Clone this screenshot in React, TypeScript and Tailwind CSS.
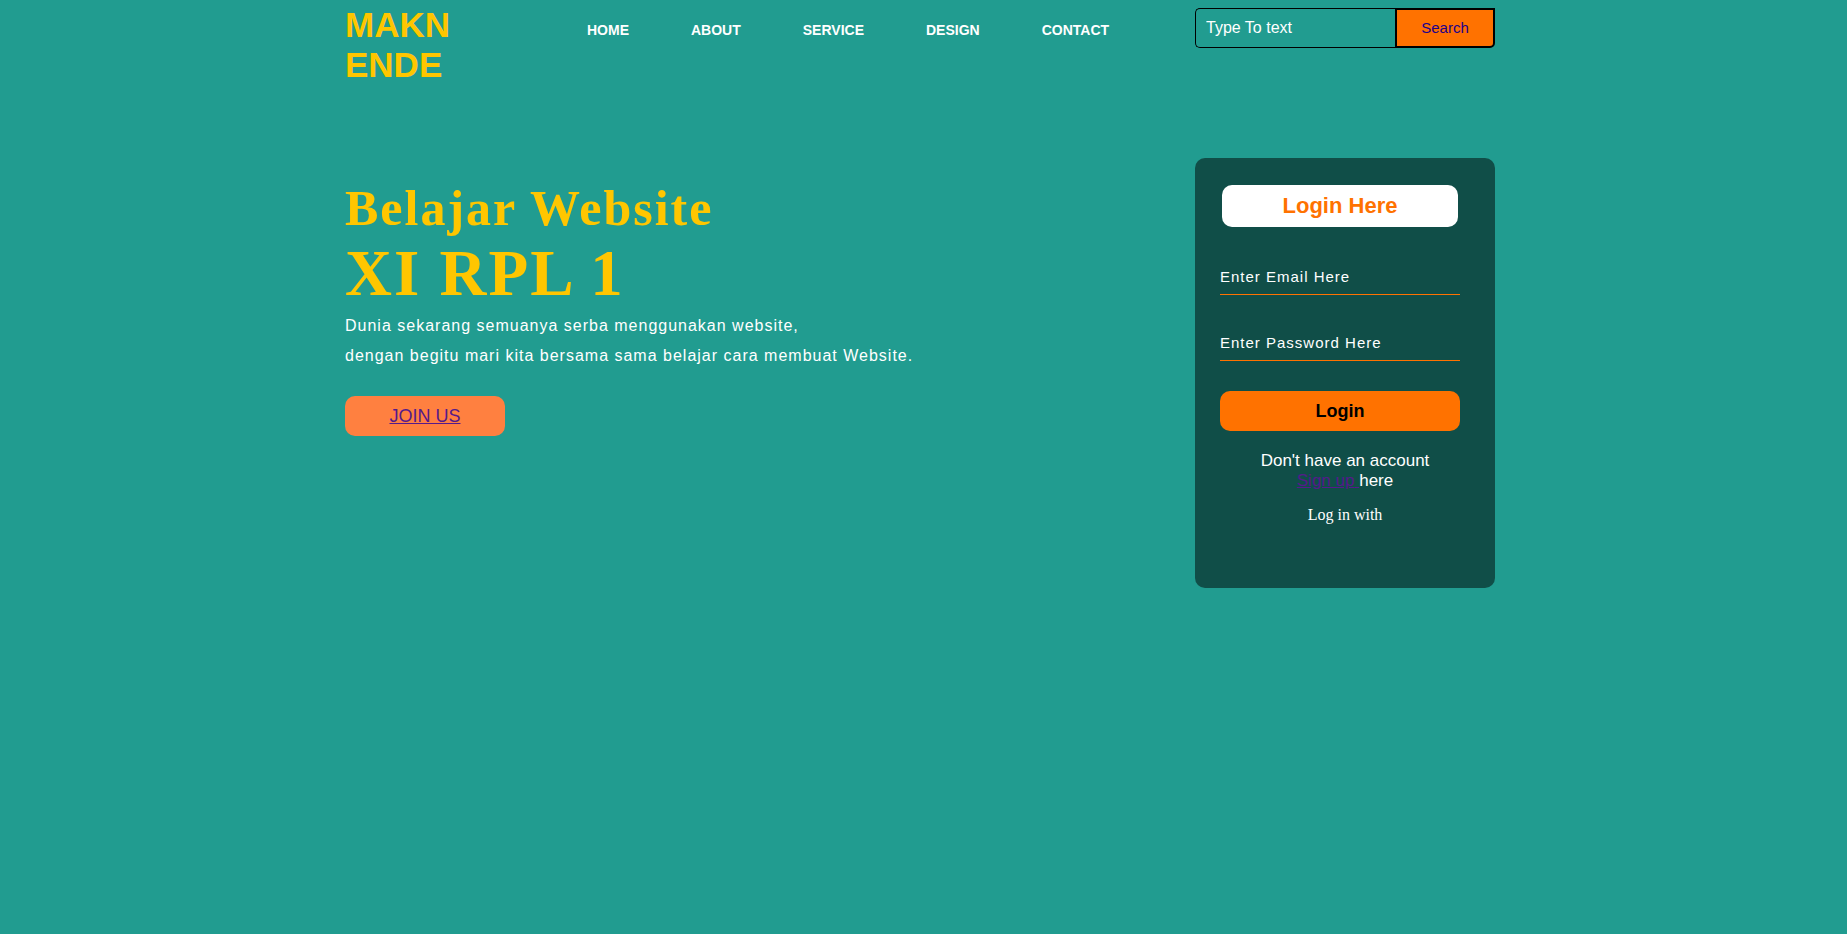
const navItems = ["HOME", "ABOUT", "SERVICE", "DESIGN", "CONTACT"];

function Header() {
  return (
    <header className="flex flex-wrap items-start gap-x-[62px] gap-y-4 pt-[5px]">
      <h2 className="w-[180px] text-[35px] leading-10 font-bold text-[#ffc600]">MAKN ENDE</h2>
      <nav className="pt-[15px]">
        <ul className="flex flex-wrap gap-x-[62px] text-sm leading-5 font-bold text-white">
          {navItems.map((item) => (
            <li key={item}>
              <a href="#">{item}</a>
            </li>
          ))}
        </ul>
      </nav>
      <form className="mt-[3px] ml-auto flex h-10 w-[300px]" onSubmit={(e) => e.preventDefault()}>
        <input
          type="search"
          aria-label="Search text"
          placeholder="Type To text"
          className="min-w-0 flex-1 appearance-none rounded-l-[5px] border border-r-0 border-black bg-transparent px-2.5 text-base text-white outline-none placeholder:text-white"
        />
        <button
          type="submit"
          className="w-[100px] rounded-br-[5px] border-2 border-black bg-[#ff7200] text-[15px] text-[#20008b]"
        >
          Search
        </button>
      </form>
    </header>
  );
}

function Hero() {
  return (
    <section className="pt-5">
      <h1 className="font-['Liberation_Serif',serif] font-bold tracking-[2px] text-[#ffc600]">
        <span className="block text-[50px] leading-[60px]">Belajar Website</span>
        <span className="block text-[65px] leading-[70px]">XI RPL 1</span>
      </h1>
      <p className="mt-[3px] text-base leading-[30px] tracking-[1px] text-white">
        Dunia sekarang semuanya serba menggunakan website,
        <br />
        dengan begitu mari kita bersama sama belajar cara membuat Website.
      </p>
      <a
        href="#"
        className="mt-[25px] flex h-10 w-40 items-center justify-center rounded-[10px] bg-[#ff8040] text-lg text-[#551a8b] underline"
      >
        JOIN US
      </a>
    </section>
  );
}

const fieldClass =
  "h-[36px] w-full border-b border-[#ff7200] bg-transparent text-[15px] tracking-[1px] text-white outline-none placeholder:text-white";

function LoginCard() {
  return (
    <form
      className="min-h-[430px] w-[300px] rounded-[10px] bg-black/50 pt-[27px] pb-[60px] text-white"
      onSubmit={(e) => e.preventDefault()}
    >
      <div className="ml-[25px] w-60">
        <h2 className="mx-0.5 rounded-[10px] bg-white text-center text-[22px] leading-[42px] font-bold text-[#ff7200]">
          Login Here
        </h2>
        <div className="mt-8 flex flex-col gap-[30px]">
          <input type="email" aria-label="Email" placeholder="Enter Email Here" className={fieldClass} />
          <input type="password" aria-label="Password" placeholder="Enter Password Here" className={fieldClass} />
          <button type="submit" className="h-10 rounded-[10px] bg-[#ff7200] text-lg font-bold text-black">
            Login
          </button>
        </div>
      </div>
      <p className="mt-5 text-center text-[17px] leading-5">
        Don't have an account
        <br />
        <a href="#" className="text-[#551a8b] underline">
          Sign up{" "}
        </a>
        here
      </p>
      <p className="mt-3.5 text-center font-['Liberation_Serif',serif] text-base leading-5">Log in with</p>
    </form>
  );
}

export default function App() {
  return (
    <div className="min-h-screen bg-[#219c90] font-['Liberation_Sans',Arial,sans-serif]">
      <div className="mx-auto max-w-[1199px] pr-7 pl-[21px]">
        <Header />
        <main className="flex flex-wrap items-start justify-between gap-8 pt-[73px]">
          <Hero />
          <LoginCard />
        </main>
      </div>
    </div>
  );
}
